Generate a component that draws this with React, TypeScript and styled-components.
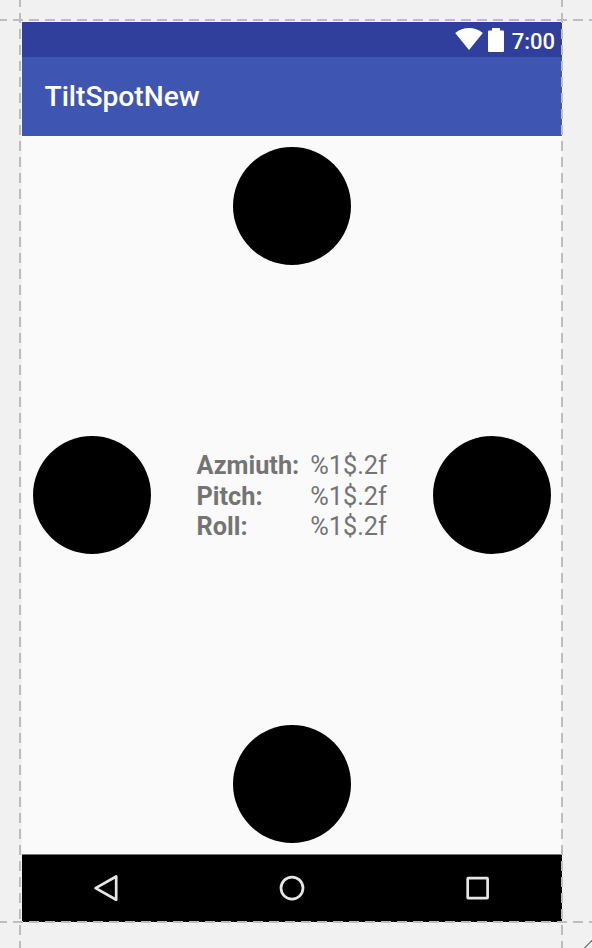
import React from 'react';
import styled, { createGlobalStyle } from 'styled-components';

const GlobalStyle = createGlobalStyle`
  *, *::before, *::after { box-sizing: border-box; }
  html, body { margin: 0; background: #f1f1f1; }
`;

const Editor = styled.main`
  position: relative;
  width: 592px;
  height: 948px;
  padding: 22px 30px 26px 22px;
  overflow: hidden;
  background: #f1f1f1;
  font-family: Roboto, sans-serif;
`;

const Device = styled.section`
  display: grid;
  grid-template-rows: 35px 79px 1fr 68px;
  width: 540px;
  height: 900px;
  background: #fafafa;
`;

const StatusBar = styled.div`
  display: flex;
  justify-content: flex-end;
  align-items: center;
  padding-right: 7px;
  background: #303f9c;
  color: #fff;
`;

const WifiIcon = styled.svg`
  width: 28px;
  height: 22px;
  margin: 0 5px 1px 0;
`;

const BatteryIcon = styled.svg`
  width: 16px;
  height: 24px;
  margin-right: 7px;
`;

const Clock = styled.time`
  width: 44px;
  padding-top: 5px;
  text-align: right;
  font-size: 22px;
  line-height: 26px;
  font-weight: 500;
`;

const AppBar = styled.header`
  display: flex;
  align-items: center;
  padding-left: 22.5px;
  background: #3f55b2;
`;

const Title = styled.h1`
  margin: 0;
  color: #fff;
  font-size: 28.2px;
  line-height: 34px;
  font-weight: 500;
`;

const Content = styled.div`
  display: grid;
  grid-template-columns: 118px 1fr 118px;
  grid-template-rows: 118px 1fr 118px;
  align-items: center;
  justify-items: center;
  padding: 11px 11px 11px;
`;

type Edge = 'top' | 'left' | 'right' | 'bottom';

const cells: Record<Edge, string> = {
  top: '1 / 2',
  left: '2 / 1',
  right: '2 / 3',
  bottom: '3 / 2',
};

const Spot = styled.div<{ $edge: Edge }>`
  grid-area: ${({ $edge }) => cells[$edge]};
  width: 118px;
  height: 118px;
  border-radius: 50%;
  background: #000;
`;

const Readings = styled.dl`
  grid-area: 2 / 2;
  display: grid;
  grid-template-columns: auto auto;
  column-gap: 11px;
  margin: 0;
  padding: 3.5px 0.6px 0 0;
  color: #747474;
  font-size: 25.3px;
  line-height: 30.4px;
  white-space: nowrap;
`;

const Label = styled.dt`
  font-weight: 700;
`;

const Value = styled.dd`
  margin: 0;
  font-weight: 400;
`;

const NavBar = styled.nav`
  display: flex;
  align-items: center;
  justify-content: space-between;
  padding: 0 70px 1px;
  border-top: 1px solid #777;
  background: #000;
`;

const NavIcon = styled.svg`
  width: 28px;
  height: 28px;
  fill: none;
  stroke: #e6e6e6;
  stroke-width: 2.7;
  stroke-linejoin: round;
`;

const Guide = styled.div<{ $axis: 'x' | 'y'; $at: number }>`
  position: absolute;
  pointer-events: none;
  ${({ $axis, $at }) =>
    $axis === 'x'
      ? `left: -3px; right: 0; top: ${$at}px; height: 2px;`
      : `top: -3px; bottom: 0; left: ${$at}px; width: 2px;`}
  background: repeating-linear-gradient(
    ${({ $axis }) => ($axis === 'x' ? 'to right' : 'to bottom')},
    #bdbdbd 0 10px,
    transparent 10px 16px
  );
`;

const ResizeGrip = styled.svg`
  position: absolute;
  right: 0;
  bottom: 0;
  width: 8px;
  height: 8px;
`;

const readings = [
  { label: 'Azmiuth:', value: '%1$.2f' },
  { label: 'Pitch:', value: '%1$.2f' },
  { label: 'Roll:', value: '%1$.2f' },
];

const edges: Edge[] = ['top', 'left', 'right', 'bottom'];

export default function App() {
  return (
    <>
      <GlobalStyle />
      <Editor>
        <Device>
          <StatusBar>
            <WifiIcon viewBox="0 0 28 22">
              <path d="M14 22 0.2 4.9C4.2 1.7 9 0 14 0s9.8 1.7 13.8 4.9Z" fill="#fff" />
            </WifiIcon>
            <BatteryIcon viewBox="0 0 16 24">
              <path d="M1 2.4h3V0h8v2.4h3q1 0 1 1V23q0 1-1 1H1q-1 0-1-1V3.4q0-1 1-1Z" fill="#fff" />
            </BatteryIcon>
            <Clock>7:00</Clock>
          </StatusBar>
          <AppBar>
            <Title>TiltSpotNew</Title>
          </AppBar>
          <Content>
            {edges.map((edge) => (
              <Spot key={edge} $edge={edge} />
            ))}
            <Readings>
              {readings.map(({ label, value }) => (
                <React.Fragment key={label}>
                  <Label>{label}</Label>
                  <Value>{value}</Value>
                </React.Fragment>
              ))}
            </Readings>
          </Content>
          <NavBar>
            <NavIcon viewBox="0 0 28 28">
              <path d="M3.6 14.1 24.2 2.5v23.2Z" />
            </NavIcon>
            <NavIcon viewBox="0 0 28 28">
              <circle cx="14" cy="14.1" r="11" />
            </NavIcon>
            <NavIcon viewBox="0 0 28 28">
              <rect x="3.7" y="4.2" width="19.9" height="19.9" rx="0.5" />
            </NavIcon>
          </NavBar>
        </Device>
        <Guide $axis="x" $at={19} />
        <Guide $axis="x" $at={921} />
        <Guide $axis="y" $at={19} />
        <Guide $axis="y" $at={561} />
        <ResizeGrip viewBox="0 0 8 8">
          <path d="M0 8.5 8.5 0" stroke="#666" strokeWidth="1.2" />
        </ResizeGrip>
      </Editor>
    </>
  );
}
